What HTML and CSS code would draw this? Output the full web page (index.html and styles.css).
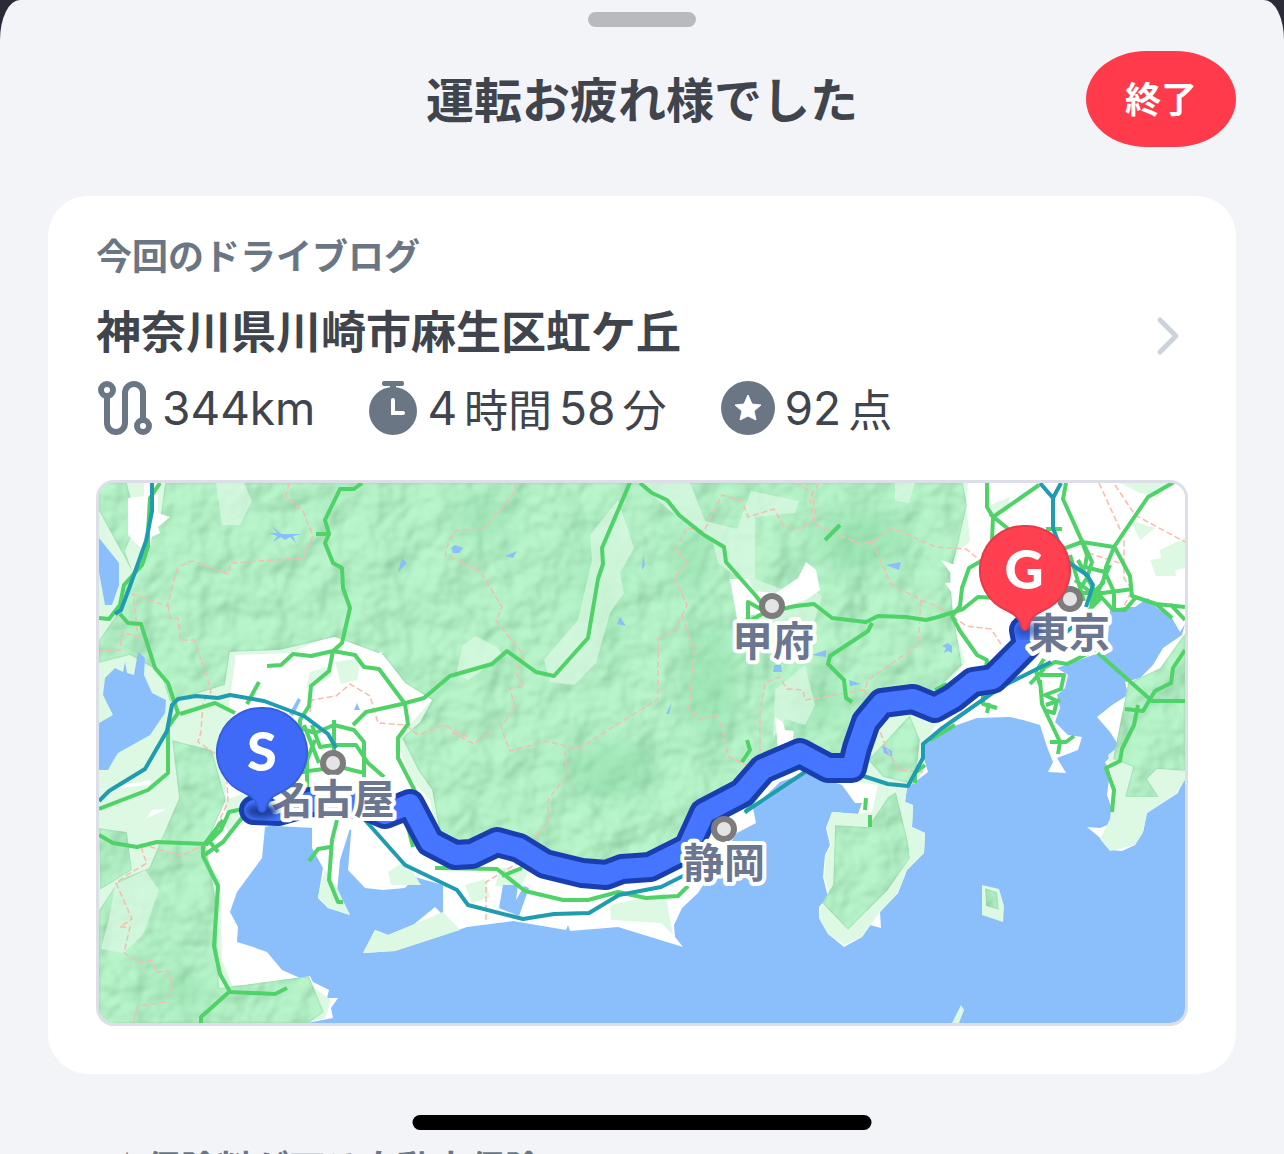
FILE: index.html
```html
<!DOCTYPE html>
<html lang="ja">
<head>
  <meta charset="UTF-8">
  <meta name="viewport" content="width=device-width, initial-scale=1.0">
  <title>運転お疲れ様でした</title>
  <link rel="stylesheet" href="styles.css">
</head>
<body>
  <div class="sheet">
    <div class="handle"></div>

    <header class="sheet-header">
      <h1>運転お疲れ様でした</h1>
      <button type="button" class="end-button">終了</button>
    </header>

    <main class="card">
      <a class="log-link" href="#log">
        <div class="log-text">
          <p class="log-label">今回のドライブログ</p>
          <h2>神奈川県川崎市麻生区虹ケ丘</h2>
        </div>
        <svg class="chevron" viewBox="0 0 24 40" aria-hidden="true">
          <path d="M4 4l16 16L4 36" />
        </svg>
      </a>

      <ul class="stats">
        <li>
          <svg class="icon" viewBox="0 0 54 54" aria-hidden="true">
            <g fill="none" stroke="#6b7685" stroke-width="6">
              <circle cx="9" cy="9" r="6" />
              <circle cx="45" cy="45" r="6" />
              <path d="M9 14v28a9 9 0 0 0 18 0V12a9 9 0 0 1 18 0v28" />
            </g>
          </svg>
          <span>344km</span>
        </li>
        <li>
          <svg class="icon icon-watch" viewBox="0 0 48 54" aria-hidden="true">
            <g fill="#6b7685">
              <rect x="13" y="0" width="22" height="5" rx="2" />
              <rect x="21" y="3" width="6" height="8" />
              <circle cx="24" cy="30" r="24" />
            </g>
            <path d="M24 19v13h10" fill="none" stroke="#fff" stroke-width="4" stroke-linecap="round" />
          </svg>
          <span>4</span><span class="unit">時間</span><span>58</span><span class="unit">分</span>
        </li>
        <li>
          <svg class="icon" viewBox="0 0 54 54" aria-hidden="true">
            <circle cx="27" cy="27" r="27" fill="#6b7685" />
            <path d="M27 14l4 9 9 1-7 6 2 9-8-4-8 4 2-9-7-6 9-1z" fill="#fff" stroke="#fff" stroke-width="1" stroke-linejoin="round" />
          </svg>
          <span>92</span><span class="unit">点</span>
        </li>
      </ul>

      <svg class="map" viewBox="99 483 1086 540" role="img" aria-label="ドライブルートの地図">
        <defs>
          <filter id="relief" x="0" y="0" width="100%" height="100%" color-interpolation-filters="sRGB">
            <feTurbulence type="fractalNoise" baseFrequency="0.028" numOctaves="3" seed="4" result="noise" />
            <feDiffuseLighting in="noise" surfaceScale="8" diffuseConstant="0.9" lighting-color="#fff" result="light">
              <feDistantLight azimuth="225" elevation="62" />
            </feDiffuseLighting>
            <feComposite in="light" in2="SourceAlpha" operator="in" result="shade" />
            <feGaussianBlur in="shade" stdDeviation="1" result="smooth" />
            <feComposite in="smooth" in2="SourceGraphic" operator="arithmetic" k1="0" k2="0.28" k3="1" k4="-0.22" result="lit" />
            <feComposite in="lit" in2="SourceAlpha" operator="in" />
          </filter>
          <filter id="soft"><feGaussianBlur stdDeviation="14" /></filter>
          <filter id="pin-shadow"><feGaussianBlur stdDeviation="3" /></filter>
        </defs>

        <!-- sea and land -->
        <rect class="sea" x="99" y="483" width="1086" height="540" />
        <path class="land" d="M99 483H1185V624L1182 635 1163 648 1153 665 1140 678 1125 682 1128 695 1112 705 1097 717 1110 732 1117 743 1113 755 1105 762 1110 772 1107 795 1113 812 1112 823 1100 828 1087 827 1105 842 1110 850 1122 851 1135 845 1143 832 1147 813 1178 793 1183 780H1185V483H99V1023H307L333 1018 331 1008 338 998 327 998 329 990 313 982 310 976 300 978 282 970 267 952 250 946 237 942 238 927 230 912 237 892 262 858 265 827 312 818 312 848 323 868 318 898 328 908 350 915 337 892 340 860 352 822 348 870 365 888 383 890 405 888 415 877 443 885 443 915 435 907 413 925 388 935 375 930 363 953 395 951 467 927 513 921 566 930 568 925 570 931 618 927 683 947 675 937 674 925 682 908 698 893 737 833 756 823 753 808 780 782 805 773 842 785 855 803 862 803 858 814 832 812 826 828 830 845 825 855 823 877 828 897 819 907 819 918 828 934 844 947 862 937 870 925 881 928 880 912 898 893 907 870 924 853 925 833 912 827 913 805 905 802 907 788 928 772 923 755 925 742 957 725 977 718 1010 717 1023 720 1040 725 1047 747 1053 762 1048 772 1066 773 1057 758 1078 750 1082 737 1068 735 1055 722 1060 708 1057 695 1065 688 1068 675 1057 668 1093 655 1107 652 1110 610 1123 607 1135 607 1148 598 1157 608 1172 618 1180 632 1185 624V483z" />
        <path class="land-light" d="M982 885l17 4 5 17-1 16-21-7zM952 1023l9-18 3 5-5 13z" />

        <!-- lowland -->
        <g class="land-light">
          <path d="M99 483H968L966 503 970 540 952 570 948 610 965 662 948 685 960 690 924 742 923 773 907 788 905 802 913 805 912 827 925 833 924 853 907 870 898 893 880 912 862 937 844 945 828 934 819 918 821 907 830 897 824 877 826 855 831 845 827 828 832 812 858 814 872 812 878 785 842 780 800 740 757 775 730 790 690 855 600 872 500 842 440 850 430 800 412 780 396 740 432 700 405 683 385 655 330 636 290 653 235 655 240 690 222 710 212 760 228 770 225 795 200 850 220 880 222 960 232 985 310 985 331 1000 325 1018 307 1023H99V840L165 810 150 780 99 790z" />
          <path d="M99 790l50-5 20-30 10-40 50-15 10-5-15 60-12 50-60 5-20 30-33-10zM225 800l30-10 0 20-28 25zM325 870l13 20 12 25-22-7-10-12zM388 872l18-12 15 25-30 0zM363 953l12-23 13 5 55-23 17 18-65 21z" />
          <path d="M474 770h20v90h-28zM610 905l55-12 8 42-12-12-50-3zM500 868l30 0-10 20-25-2zM465 885l20-6 5 18-18 6z" />
          <path d="M1185 640v140l-8 13-30 20-4 19-8 13-25 6-10-12 10-20 4-34-6-30 15-12 12-40 30-40z" />
        </g>

        <!-- mountains -->
        <g class="mountain" filter="url(#relief)">
          <path d="M118 483H963L967 505 958 545 950 575 953 612 962 665 945 682 930 700 880 695 860 730 850 760 800 745 757 770 732 795 700 820 688 850 600 866 545 850 500 836 460 848 440 835 432 790 418 770 402 738 420 722 432 700 405 683 383 655 335 637 280 650 230 652 225 685 170 702 160 672 130 655 99 663V640L120 610 128 580 150 540 160 520 165 483z" />
          <path d="M99 483h28l10 40-12 28 8 22-34-62zM172 740l40 10 14 50-20 45 10 55 3 88 90-12 15 36-15 11H99V910l20-30 30-12 30-70z" />
          <path d="M99 828l28 4 5 38-32 20zM835 825l33 2 20-30 8-5 12 50 2 16-22 32-40 40-26-27 11-18z" />
          <path d="M868 760l42-45 10 25-5 45-32-8zM1128 683l32-15 25-35v138l-28-2-10 10 12 18-34 0 8-30-20-8z" />
          <path d="M985 888l12 4 2 18-13-4z" />
        </g>
        <g class="summit" filter="url(#soft)">
          <ellipse cx="820" cy="702" rx="25" ry="18" />
          <ellipse cx="485" cy="520" rx="24" ry="18" />
          <ellipse cx="600" cy="590" rx="16" ry="60" />
          <ellipse cx="710" cy="680" rx="24" ry="60" />
          <ellipse cx="690" cy="560" rx="16" ry="36" />
          <ellipse cx="610" cy="770" rx="50" ry="25" />
          <ellipse cx="860" cy="540" rx="50" ry="28" />
          <ellipse cx="180" cy="990" rx="30" ry="14" />
        </g>
        <g class="valley">
          <path d="M216 483h28l8 18-12 24h-18zM590 535l28-35 16 48-14 25 4 20-14 20-14 50-22 22-24-3-6-22 34-40 14-60zM640 483h50l15 38 32 8 14-38 48 10-4 12-40 4v62l40 15 12-8 15 10-12 40-50 4-14-57-28-20-6-24-42-28zM463 645l13-9 22 12 5 8-35 24-12-6zM895 483h20l-6 20-14-2zM99 515l28 90-28-15zM115 885l30-15 14 20-16 45-20 18-22-4 8-30z" />
          <path d="M775 690l30-25 10 40-10 20-20-6-12 20z" />
        </g>

        <!-- towns -->
        <path class="land" d="M128 498l16-2 0-13h14v30l12 4-12 10 2 6-8 4-4 18-20-20zM236 655l20 8 30-2 20-6 22 4 24 1 30-8-5 28 30 10-18 8 12 28-5 30 6 22 10 30 8 30-65-8-100-5-18-80-8-40zM730 579l18 0 6 12 22 2 22-15 8-16 10 8 4 20-14 10-26 8-32 8-10 8zM775 717l8 5 2 8 9 1-2 14-14 4z" />
        <path class="land" d="M972 500L994 488 1114 483H1185V597L1165 602 1148 597 1135 606 1110 608 1100 650 1060 665 1030 690 985 700 972 705 960 690 970 675 965 660 972 650 950 615 958 602 945 583 957 582 941 560 955 565 958 550 982 535z" />
        <path class="land-light" d="M335 662l26-4-4 22-16 4zM310 672l22-6 0 10-26 12zM1120 483h50l-12 14-18-4zM1160 550l25-12v30l-22 5zM1130 520l25 8-15 12zM1150 560l24-4 2 20-20 0zM990 505l20-8-2 14-16 6zM130 760l26-10 4 20-26 10z" />

        <!-- lakes -->
        <g class="sea">
          <path d="M99 538l20 25v22l-7 20h-7l-6-33zM99 723l14-8-10-20 2-17 10-10 8 4 2-10 2 11 7 2 4-23 7 6-1 17 8 18 14 7-1 13-15 22-32 18-5 8-5 9h-9z" />
          <path d="M268 533l9 0-5-7 6 5 4 3 20 0-9 2 3 7-6-6-5 3-4-3-8 5 4-6zM402 558l5 5-9 9zM451 548l4-3 8 3-4 5h-6zM505 556l12-5-4 7zM643 555l2 10-3 5zM620 617l6 9-9-2zM672 702l-3 12-3 0zM774 665h7l1 7h-9zM886 565l15-3-2 8zM812 655l14-5v7zM948 643l4 3 0 7-4-2-4 2 2-5-4-2zM849 680l12 4-11 2zM882 745l10 6 0 6-8-4zM503 885l15 0-2 15 8-14 5 2-10 28-20-8zM298 698l3 2-8 16-4-2zM357 703l3 7h-6z" />
        </g>

        <!-- prefecture borders -->
        <g class="border-line">
          <path d="M289 483l-3 14 17 14 10 25-10 22-72 5-3 11-36-13-14 6-11 39-34-12 5 43-16-5-2 18-21 1M168 605l2 13h8l2 22 14 0 12 33 5 19-8 10-2 30-3 10 15 10 13 10 2 40-19 40-28 14-40-12 2 10 4 9-20 12-11 8 16 36-12 8 10 0-6 26 16 10 12-3 4 12 13-1 3 18-7 13-27 4-6 18" />
          <path d="M516 483l-3 11-30 35-26 1-8 10-4 15 35 16 22 36-6 14 27 33-7 19 8 14-14 1 5 20-14 19 9 24 36-10 32 8 80-50v-60l17-9 12-25-13-28 14-14-13-13 12-22 17 3 18-36 20 6 6 16 26-8 10 18 18 1 14-10-4-26-24-14M682 616l12 34-5 58 9 12 18-5 7 14 5 27 20 10" />
          <path d="M819 483l-9 15 4 26 46 20 14-3 18-13 44 19 30 2 16 13M872 541l19 43 30 16 20 8 25 18 25 3 10 15M921 600l-3 45-50 35-3 10-60 10-2-10-16-1-8-12-14 6-5 30v50M1099 483l25 55 0 40 8 12-10 20M1115 485l20 30 50 27M865 690l20 55 13 25 25 2M1088 553l35 11M452 732l22 12 18-14M310 712l2-12 24-4 14-12 20 12 8 27 28 2 12 10 26-10 24 12M486 920v-38l30-18 20-28 12-14 0-22 20-26-4-28" />
        </g>

        <!-- toll roads -->
        <g class="road">
          <path d="M160 483l-10 15-2 35 0 14-6 18-18 20-4 20-11 14-10-1M120 614l8 9 13 1 14 44 13 15 10 30-10 14v46l-20 17-49 19M180 714l35-11 20 10" />
          <path d="M362 483l-8 6h-14l-15 31 4 14-4 9 8 20 9 5 1 20 7 20-8 35-9 8-22 5-18-2-12 11-14 1M327 534h-11M333 651l-4 20-18 15-2 20-9 14v8l15 5 19-8 20 5 10 12v60M333 651l22 4 9 12 15 2 26 35 3 20-10 14v20l18 35-4 8M353 725l13-13 36-8 22-6 26-22 42-12 15-13 29 21 18 4 34-38 10-59 5-15-1-16 29-68M315 740l-8 20 0 40M312 725l8 22 14-2 22 0 12 18 16 14M334 720v45l-2 25M300 772l40-5 24 6M259 682l-12 22M304 725l15 38" />
          <path d="M640 483l12 10 15 7 12 15 25 20 20 12 2 15 30 34 12 16 28-6 18-2 18 14 34 4 12-6 28 1 20 3 12-3 25-8 15-12 20 1M770 604l-8 10-14 8M766 612l-18-10v30" />
          <path d="M872 623l-4 8-38 25-2 8 16 16 2 18 6 4M825 540l15-15M987 483v24l6 10-2 50-8 5M993 517l46-32M990 514l22 18M983 560l-14 8-7 20-2 18-8 10 8 15 17 24 10 5-4 32 0 12 14 4M989 703l-2 10" />
          <path d="M1066 483l-3 16 18 40 6 16-2 12 20 5 9 20 0 20M1060 550l22-8 32 5 34-50 35-20M1114 546l16 30 2 20 24 8 29 3M1114 547l-8 20-3 16-10 10-2 14M1082 540l10 22-5 16-10 15 26 0 30-4M1095 590l18 20 12 0 12-14M1156 604l16 14M1170 604l15 16M1075 580l18 14M1110 565l-20 45M1102 597l-20 20M1078 560l20 38M1070 555l14 46M1046 529h16" />
          <path d="M1098 653l54 48h33M1185 650l-12 18-2 15-16 8-12 20-18-2M1138 705l-4 20-12 24-2 12-14 7 8 22-2 22M1040 670l15-8 12 2 28-14M1040 685l-4-14 8-12M1040 675l24 0-3 14-16 6 12 6-3 12-10-3M1040 680l2 24 18 38-2 12M1050 742h16l8-6M1030 684l14-15M1046 705l14-5" />
          <path d="M99 835l14 8 24 4 20-5 50 2 14-14 8-18 18-4M223 820l-20 26v10l15 30-4 60 6 28 10 18 45 2 12-6M229 992l-28 25v6M203 856l20-14 22-28 12-6M210 842l8 10M337 820l-5 20-3 40 9 22 5 0M330 847l-12 2-9 12" />
          <path d="M405 815l8 32M435 868l62 1 28 22 38 9 25 0 30-8 28 6 32-2 10-10M502 876l20-8M747 740l3 10-8 12M765 785l-20 28M870 815v12M866 798l-1 12M925 765l-10 8 0 10M930 740l25-15M935 690l12-6" />
        </g>

        <!-- shinkansen -->
        <g class="rail">
          <path d="M152 483v28l-6 30-16 45-9 24-6 4M99 801l10-10 36-22 22-38 5-26 6-6 18-3 22 2 12-3 34 6 40 15 24 18 8 14M365 820l40 45 52 25 11 15 55 14 31-5 35-1 30-18 42-8 28-14M745 812l60-40M860 775l28 9 20 2 15-28v-14l18-15 60-42 50-25M1040 483l13 15v30l12 32 22 15 6 10-7 22M1061 483l-8 15M1075 625l-12 10" />
        </g>

        <!-- driven route -->
        <path class="route-edge" d="M254 810L278 811 310 802 362 804 385 814 410 804 430 842 455 855 472 854 497 842 519 848 545 864 582 873 606 875 622 869 650 867 688 848 704 813 742 793 763 769 800 753 828 768 852 768 857 748 866 722 882 703 913 699 935 708 953 698 973 682 993 679 1027 645 1024 630" />
        <path class="route" d="M254 810L278 811 310 802 362 804 385 814 410 804 430 842 455 855 472 854 497 842 519 848 545 864 582 873 606 875 622 869 650 867 688 848 704 813 742 793 763 769 800 753 828 768 852 768 857 748 866 722 882 703 913 699 935 708 953 698 973 682 993 679 1027 645 1024 630" />

        <!-- cities -->
        <g class="city-dot">
          <circle cx="772" cy="606" r="10" />
          <circle cx="333" cy="763" r="10" />
          <circle cx="724" cy="829" r="10" />
          <circle cx="1070" cy="599" r="10" />
        </g>
        <g class="city-name">
          <text x="773" y="656">甲府</text>
          <text x="333" y="814">名古屋</text>
          <text x="724" y="878">静岡</text>
          <text x="1069" y="648">東京</text>
        </g>

        <!-- start and goal pins -->
        <ellipse cx="262" cy="811" rx="16" ry="7" fill="#1b3c9c" filter="url(#pin-shadow)" />
        <path class="pin pin-start" d="M262 708a44 44 0 0 1 17 85c-9 4-12 9-14 17q-3 4-6 0c-2-8-5-13-14-17a44 44 0 0 1 17-85z" />
        <text class="pin-text" x="262" y="771">S</text>
        <ellipse cx="1028" cy="630" rx="14" ry="8" fill="#1b3c9c" opacity="0.6" filter="url(#pin-shadow)" />
        <path class="pin pin-goal" d="M1025 526a44 44 0 0 1 17 85c-9 4-12 9-14 17q-3 4-6 0c-2-8-5-13-14-17a44 44 0 0 1 17-85z" />
        <text class="pin-text" x="1024" y="589">G</text>
      </svg>
    </main>

    <p class="next-section">☆保険料が下る自動車保険</p>
  </div>
  <div class="home-indicator"></div>
</body>
</html>
```

FILE: styles.css
```css
* {
  box-sizing: border-box;
}

body {
  margin: 0;
  height: 100vh;
  overflow: hidden;
  background-color: #2b2b38;
  color: #40444d;
  font-family: "Noto Sans CJK JP", sans-serif;
}

h1, h2, p, ul {
  margin: 0;
  padding: 0;
}

.sheet {
  height: 100%;
  overflow: hidden;
  padding: 12px 48px 0;
  background-color: #f2f4f8;
  border-radius: 20px 20px 0 0 / 40px 40px 0 0;
}

.handle {
  width: 108px;
  height: 15px;
  margin: 0 auto 24px;
  border-radius: 8px;
  background-color: #b8bac0;
}

.sheet-header {
  display: grid;
  grid-template-columns: 1fr auto 1fr;
  align-items: center;
  margin-bottom: 49px;
}

.sheet-header h1 {
  grid-column: 2;
  padding-bottom: 4px;
  font-size: 48px;
  line-height: 72px;
  font-weight: 700;
}

.end-button {
  justify-self: end;
  width: 150px;
  height: 96px;
  padding: 0 0 4px;
  border: none;
  border-radius: 60px / 48px;
  background-color: #ff3b4b;
  color: #fff;
  font-family: inherit;
  font-size: 36px;
  font-weight: 700;
  cursor: pointer;
}

.card {
  padding: 32px 48px 48px;
  border-radius: 40px;
  background-color: #fff;
}

.log-link {
  display: flex;
  align-items: flex-end;
  justify-content: space-between;
  color: inherit;
  text-decoration: none;
}

.log-label {
  margin-bottom: 16px;
  color: #6b7685;
  font-size: 36px;
  line-height: 52px;
  font-weight: 700;
}

.log-link h2 {
  font-size: 45px;
  line-height: 68px;
  font-weight: 700;
}

.chevron {
  width: 24px;
  height: 40px;
  margin: 0 8px 8px 0;
  fill: none;
  stroke: #cdd2db;
  stroke-width: 5;
  stroke-linecap: round;
  stroke-linejoin: round;
}

.stats {
  display: flex;
  gap: 52px;
  margin: 16px 0 44px;
  list-style: none;
  font-family: Inter, "Noto Sans CJK JP", sans-serif;
  font-size: 46px;
  line-height: 56px;
}

.stats li {
  display: flex;
  align-items: center;
  gap: 7px;
}

.stats .unit {
  font-family: "Noto Sans CJK JP", sans-serif;
  font-size: 44px;
}

.icon {
  width: 54px;
  height: 54px;
  margin: 0 3px 0 2px;
}

.icon-watch {
  width: 48px;
}

.map {
  display: block;
  width: 100%;
  border: 3px solid #dcdfe8;
  border-radius: 18px;
}

.sea {
  fill: #8bbffb;
}

.land {
  fill: #fff;
}

.land-light {
  fill: #ddf9e4;
}

.mountain {
  fill: #b1eec4;
}

.valley {
  fill: #d9f8e1;
  opacity: 0.75;
}

.summit {
  fill: #7fd69b;
  opacity: 0.45;
}

.border-line {
  fill: none;
  stroke: #f7bcae;
  stroke-width: 1.5;
  stroke-dasharray: 6 3;
}

.road {
  fill: none;
  stroke: #4fd267;
  stroke-width: 4;
  stroke-linejoin: round;
}

.rail {
  fill: none;
  stroke: #1f9cb0;
  stroke-width: 4;
  stroke-linejoin: round;
}

.route-edge,
.route {
  fill: none;
  stroke: #193eb0;
  stroke-width: 30;
  stroke-linecap: round;
  stroke-linejoin: round;
}

.route {
  stroke: #4675ff;
  stroke-width: 20;
}

.city-dot {
  fill: #e4e4e4;
  stroke: #7c7c7c;
  stroke-width: 6;
}

.city-name {
  fill: #6b7790;
  stroke: #fff;
  stroke-width: 8;
  stroke-linejoin: round;
  paint-order: stroke;
  font-size: 41px;
  font-weight: 700;
  text-anchor: middle;
}

.pin {
  stroke-width: 2;
}

.pin-start {
  fill: #3e6af7;
  stroke: #365fdc;
}

.pin-goal {
  fill: #ff4050;
  stroke: #e53a4a;
}

.pin-text {
  fill: #fff;
  font-family: Lato, sans-serif;
  font-size: 54px;
  font-weight: 900;
  text-anchor: middle;
}

.next-section {
  margin: 66px 61px 0;
  color: #6b7685;
  font-size: 36px;
  line-height: 52px;
  font-weight: 700;
}

.home-indicator {
  position: fixed;
  bottom: 24px;
  left: 50%;
  width: 459px;
  height: 15px;
  border-radius: 8px;
  background-color: #000;
  transform: translateX(-50%);
}
```
